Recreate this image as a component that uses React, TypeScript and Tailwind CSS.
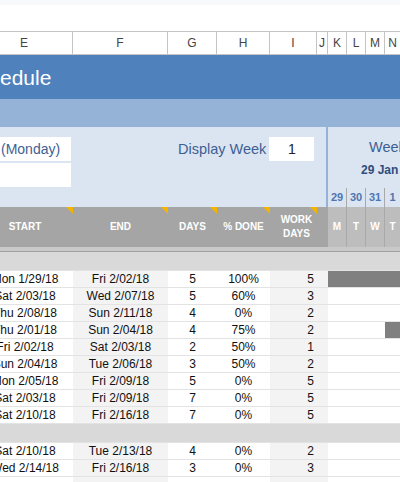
import React from "react";

type R = { s: string; e: string; d: number; p: string; w: number; g: boolean[] };

const rows1: R[] = [
  { s: "Mon 1/29/18", e: "Fri 2/02/18", d: 5, p: "100%", w: 5, g: [true, true, true, true] },
  { s: "Sat 2/03/18", e: "Wed 2/07/18", d: 5, p: "60%", w: 3, g: [false, false, false, false] },
  { s: "Thu 2/08/18", e: "Sun 2/11/18", d: 4, p: "0%", w: 2, g: [false, false, false, false] },
  { s: "Thu 2/01/18", e: "Sun 2/04/18", d: 4, p: "75%", w: 2, g: [false, false, false, true] },
  { s: "Fri 2/02/18", e: "Sat 2/03/18", d: 2, p: "50%", w: 1, g: [false, false, false, false] },
  { s: "Sun 2/04/18", e: "Tue 2/06/18", d: 3, p: "50%", w: 2, g: [false, false, false, false] },
  { s: "Mon 2/05/18", e: "Fri 2/09/18", d: 5, p: "0%", w: 5, g: [false, false, false, false] },
  { s: "Sat 2/03/18", e: "Fri 2/09/18", d: 7, p: "0%", w: 5, g: [false, false, false, false] },
  { s: "Sat 2/10/18", e: "Fri 2/16/18", d: 7, p: "0%", w: 5, g: [false, false, false, false] },
];
const rows2: R[] = [
  { s: "Sat 2/10/18", e: "Tue 2/13/18", d: 4, p: "0%", w: 2, g: [false, false, false, false] },
  { s: "Wed 2/14/18", e: "Fri 2/16/18", d: 3, p: "0%", w: 3, g: [false, false, false, false] },
  { s: "", e: "", d: 0, p: "", w: 0, g: [false, false, false, false] },
];

const dayW = ["w-[19px]", "w-[19px]", "w-[19px]", "w-[15px]"];

function Row({ r }: { r: R }) {
  return (
    <div className="flex h-[17px] shrink-0 border-b border-[#e3e3e3] text-[12px] leading-[17px] text-[#111]">
      <div className="w-[73px] overflow-hidden bg-white">
        <div className="ml-[-22px] w-[94px] text-center whitespace-nowrap">{r.s}</div>
      </div>
      <div className="w-[95px] bg-[#f3f3f3] text-center whitespace-nowrap">{r.e}</div>
      <div className="w-[49px] bg-white text-center">{r.d ? r.d : ""}</div>
      <div className="w-[53px] bg-white text-center">{r.p}</div>
      <div className="w-[58px] bg-[#f3f3f3] pr-[14px] text-right">{r.w ? r.w : ""}</div>
      <div className="flex flex-1 bg-white">
        {r.g.map((f, i) => (
          <div key={i} className={`${dayW[i]} ${f ? "bg-[#808080]" : ""}`} />
        ))}
      </div>
    </div>
  );
}

function Tri() {
  return (
    <div className="absolute right-0 top-0 h-0 w-0 border-l-[7px] border-t-[7px] border-l-transparent border-t-[#f4b400]" />
  );
}

export default function App() {
  const letters = [
    { t: "E", w: "w-[73px]", c: "pr-[24px]" },
    { t: "F", w: "w-[95px]", c: "" },
    { t: "G", w: "w-[49px]", c: "" },
    { t: "H", w: "w-[53px]", c: "" },
    { t: "I", w: "w-[47px]", c: "" },
    { t: "J", w: "w-[11px]", c: "" },
    { t: "K", w: "w-[19px]", c: "" },
    { t: "L", w: "w-[19px]", c: "" },
    { t: "M", w: "w-[19px]", c: "" },
    { t: "N", w: "w-[15px]", c: "" },
  ];
  return (
    <div className="flex h-[482px] w-[400px] flex-col overflow-hidden bg-white font-['Liberation_Sans',Arial,sans-serif]">
      <div className="h-[5px] shrink-0 bg-[#f8f9fa]" />
      <div className="h-[26px] shrink-0 bg-white" />
      {/* column letters */}
      <div className="flex h-[24px] shrink-0 border-y border-[#c4c4c4] text-[12px] leading-[22px] text-[#444]">
        {letters.map((l, i) => (
          <div
            key={i}
            className={`${l.w} ${l.c} shrink-0 text-center ${i < 9 ? "border-r border-[#c4c4c4]" : ""}`}
          >
            {l.t}
          </div>
        ))}
      </div>
      {/* title */}
      <div className="flex h-[44px] shrink-0 items-center bg-[#4f81bd] text-[21px] text-white">
        <span className="leading-none">edule</span>
      </div>
      <div className="h-[28px] shrink-0 bg-[#95b3d7]" />
      {/* settings area */}
      <div className="flex h-[80px] shrink-0 bg-[#dbe5f1]">
        <div className="flex w-[326px] shrink-0 flex-col pt-[10px]">
          <div className="flex items-start">
            <div className="h-[24px] w-[71px] overflow-hidden bg-white text-[14px] leading-[24px] text-[#3e5f93]">
              <div className="whitespace-nowrap pl-[1px]">(Monday)</div>
            </div>
            <div className="ml-[107px] text-[14.5px] leading-[24px] text-[#3e5f93] whitespace-nowrap">Display Week</div>
            <div className="ml-[3px] h-[24px] w-[45px] bg-white text-center text-[14px] leading-[24px] text-[#222]">
              1
            </div>
          </div>
          <div className="mt-[2px] h-[24px] w-[71px] bg-white" />
        </div>
        <div className="w-[2px] shrink-0 bg-[#95b3d7]" />
        <div className="flex flex-1 flex-col overflow-hidden">
          <div className="h-[35px] pl-[41px] pt-[12px] text-[14.5px] leading-[16px] text-[#3e5f93] whitespace-nowrap">
            Week 1
          </div>
          <div className="h-[26px] pl-[33px] text-[12px] font-bold leading-[16px] text-[#2f4d7e] whitespace-nowrap">
            29 Jan 2018
          </div>
          <div className="flex h-[19px] text-[11px] font-bold leading-[19px] text-[#4f75b0]">
            {["29", "30", "31", "1"].map((d, i) => (
              <div
                key={i}
                className={`${dayW[i]} text-center ${i < 3 ? "border-r border-[#a9a9a9]" : ""}`}
              >
                {d}
              </div>
            ))}
          </div>
        </div>
      </div>
      {/* header */}
      <div className="flex h-[40px] shrink-0 text-[10px] font-bold leading-[14px] text-white">
        <div className="relative flex w-[73px] items-center justify-center bg-[#a5a5a5] pr-[23px]">
          START
          <Tri />
        </div>
        <div className="relative flex w-[95px] items-center justify-center bg-[#a5a5a5]">
          END
          <Tri />
        </div>
        <div className="relative flex w-[49px] items-center justify-center bg-[#a5a5a5]">
          DAYS
          <Tri />
        </div>
        <div className="relative flex w-[53px] items-center justify-center bg-[#a5a5a5]">
          % DONE
          <Tri />
        </div>
        <div className="relative flex w-[47px] items-center justify-center bg-[#a5a5a5] pl-[6px] text-center">
          WORK
          <br />
          DAYS
          <Tri />
        </div>
        <div className="w-[11px] bg-[#a5a5a5]" />
        <div className="flex flex-1 bg-[#bdbdbd] text-[10px]">
          {["M", "T", "W", "T"].map((d, i) => (
            <div
              key={i}
              className={`${dayW[i]} flex items-center justify-center ${i < 3 ? "border-r border-[#a9a9a9]" : ""}`}
            >
              {d}
            </div>
          ))}
        </div>
      </div>
      <div className="h-[5px] shrink-0 border-b border-[#a0a0a0] bg-[#c9c9c9]" />
      <div className="h-[19px] shrink-0 border-b border-[#e3e3e3] bg-[#d9d9d9]" />
      {rows1.map((r, i) => (
        <Row key={i} r={r} />
      ))}
      <div className="h-[19px] shrink-0 border-b border-[#e3e3e3] bg-[#d9d9d9]" />
      {rows2.map((r, i) => (
        <Row key={i} r={r} />
      ))}
    </div>
  );
}
